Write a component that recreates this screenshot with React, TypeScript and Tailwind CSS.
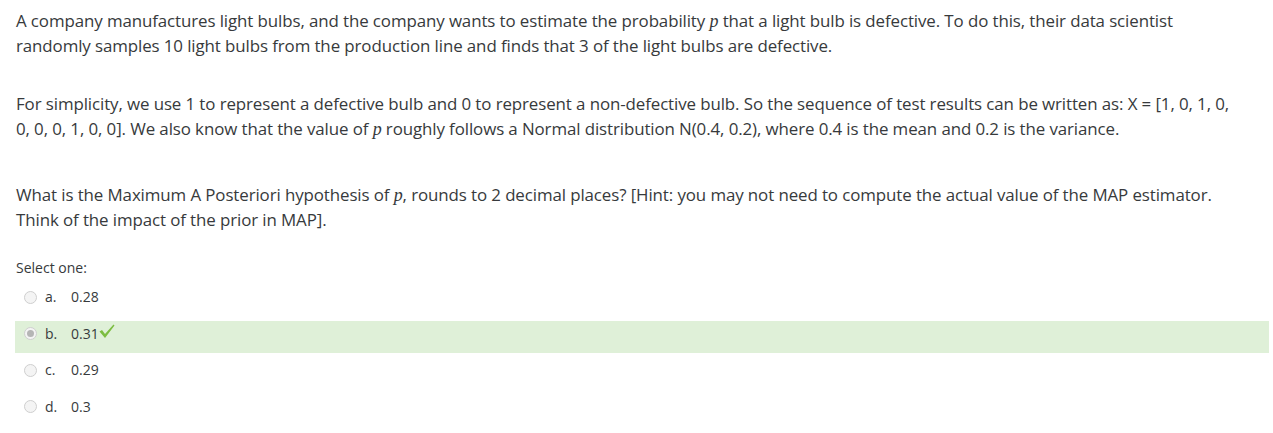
const font = { fontFamily: '"Open Sans", "Noto Sans", sans-serif' }

function P() {
  return <span className="italic font-['Liberation_Serif',serif] text-[18px] leading-none">p</span>
}

function Radio({ checked }: { checked?: boolean }) {
  return (
    <span className="w-[13px] h-[13px] rounded-full border border-[#cfcfcf] bg-[#f4f4f4] flex items-center justify-center shrink-0">
      {checked && <span className="w-[7px] h-[7px] rounded-full bg-[#b5b5b5]" />}
    </span>
  )
}

const options = [
  { letter: 'a.', value: '0.28' },
  { letter: 'b.', value: '0.31', correct: true },
  { letter: 'c.', value: '0.29' },
  { letter: 'd.', value: '0.3' },
]

export default function App() {
  return (
    <div className="bg-white w-[1273px] h-[433px] text-[#373a3c] pl-[15px] pr-[4px] pt-[8px]" style={font}>
      <div className="text-[16.9px] leading-[25px] pl-px pr-[31px] tracking-[-0.1px]">
        <p>
          A company manufactures light bulbs, and the company wants to estimate the probability <P /> that a light bulb is defective. To do this, their data scientist randomly samples 10 light bulbs from the production line and finds that 3 of the light bulbs are defective.
        </p>
        <p className="mt-[33px]">
          For simplicity, we use 1 to represent a defective bulb and 0 to represent a non-defective bulb. So the sequence of test results can be written as: X = [1, 0, 1, 0, 0, 0, 0, 1, 0, 0]. We also know that the value of <P /> roughly follows a Normal distribution N(0.4, 0.2), where 0.4 is the mean and 0.2 is the variance.
        </p>
        <p className="mt-[41px]">
          What is the Maximum A Posteriori hypothesis of <P />, rounds to 2 decimal places? [Hint: you may not need to compute the actual value of the MAP estimator. Think of the impact of the prior in MAP].
        </p>
      </div>
      <div className="text-[14px] leading-[20px] pl-px mt-[26px]">Select one:</div>
      <div className="mt-[6px] flex flex-col gap-[4px]">
        {options.map((o) => (
          <div
            key={o.letter}
            className={`flex items-center h-[32.5px] pl-[9px] pb-[8px] pt-[2px] text-[14px] leading-[20px] ${o.correct ? 'bg-[#dff0d8]' : ''}`}
          >
            <Radio checked={o.correct} />
            <span className="ml-[8px] w-[26px]">{o.letter}</span>
            <span>{o.value}</span>
            {o.correct && (
              <svg width="16" height="15" viewBox="0 0 16 15" className="-mt-[5px]">
                <path d="M0.5 7.5 L3 6 L6 10 L14.5 0.5 L15.5 1.5 L6 14 Z" fill="#7cbd41" />
              </svg>
            )}
          </div>
        ))}
      </div>
    </div>
  )
}
